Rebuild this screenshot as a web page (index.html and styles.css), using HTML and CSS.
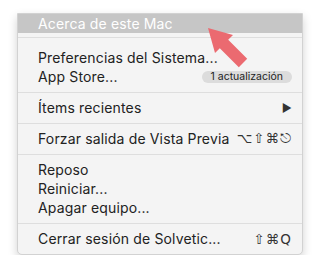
FILE: index.html
```html
<!DOCTYPE html>
<html lang="es">
<head>
  <meta charset="UTF-8" />
  <title>Menú Apple</title>
  <link rel="stylesheet" href="styles.css">
</head>
<body>
  <div class="menu">
    <div class="item active">Acerca de este Mac</div>
    <div class="sep first"></div>
    <div class="item">Preferencias del Sistema...</div>
    <div class="item">App Store...<span class="badge">1 actualización</span></div>
    <div class="sep"></div>
    <div class="item">Ítems recientes<span class="sub">&#9654;</span></div>
    <div class="sep"></div>
    <div class="item">Forzar salida de Vista Previa<span class="keys">&#8997;&#8679;&#8984;&#9099;</span></div>
    <div class="sep"></div>
    <div class="item">Reposo</div>
    <div class="item">Reiniciar...</div>
    <div class="item">Apagar equipo...</div>
    <div class="sep"></div>
    <div class="item">Cerrar sesión de Solvetic...<span class="keys">&#8679;&#8984;Q</span></div>
  </div>

  <svg class="pointer" width="319" height="273" viewBox="0 0 319 273">
    <polygon points="208,28 233,35 228.2,39.8 247.2,58.8 238.8,67.2 219.8,48.2 215,53" fill="#eb6a70"/>
  </svg>
</body>
</html>
```

FILE: styles.css
```css
* { box-sizing: border-box; }
body {
  margin: 0; padding: 0;
  background: #fff;
  font-family: Inter, "Liberation Sans", sans-serif;
}
.menu {
  margin: 13px 0 0 17px;
  width: 286px;
  background: #f4f4f4;
  border: 1px solid #d2d2d2;
  border-radius: 0 0 5px 5px;
  padding-bottom: 6px;
  box-shadow: 0 4px 10px rgba(0,0,0,0.18);
}
.item {
  display: flex; align-items: center; justify-content: space-between;
  height: 19px;
  padding: 0 10px 0 20px;
  font-size: 14px; color: #222; letter-spacing: 0.15px;
}
.item.active { background: #c6c6c6; color: #fff; }
.sep { height: 12px; display: flex; align-items: center; }
.sep::before { content: ""; flex: 1; height: 1px; background: #dedede; }
.sep.first { height: 15px; align-items: flex-start; }
.sep.first::before { margin-top: 4px; }
.badge {
  background: #dcdcdc; color: #222;
  font-size: 10.5px; line-height: 12px; letter-spacing: 0;
  padding: 0 9px; border-radius: 6px;
}
.sub { font-size: 11px; color: #333; }
.keys { font-family: "DejaVu Sans", sans-serif; font-size: 13.5px; color: #333; letter-spacing: 1px; }
.pointer { position: absolute; left: 0; top: 0; }
```
